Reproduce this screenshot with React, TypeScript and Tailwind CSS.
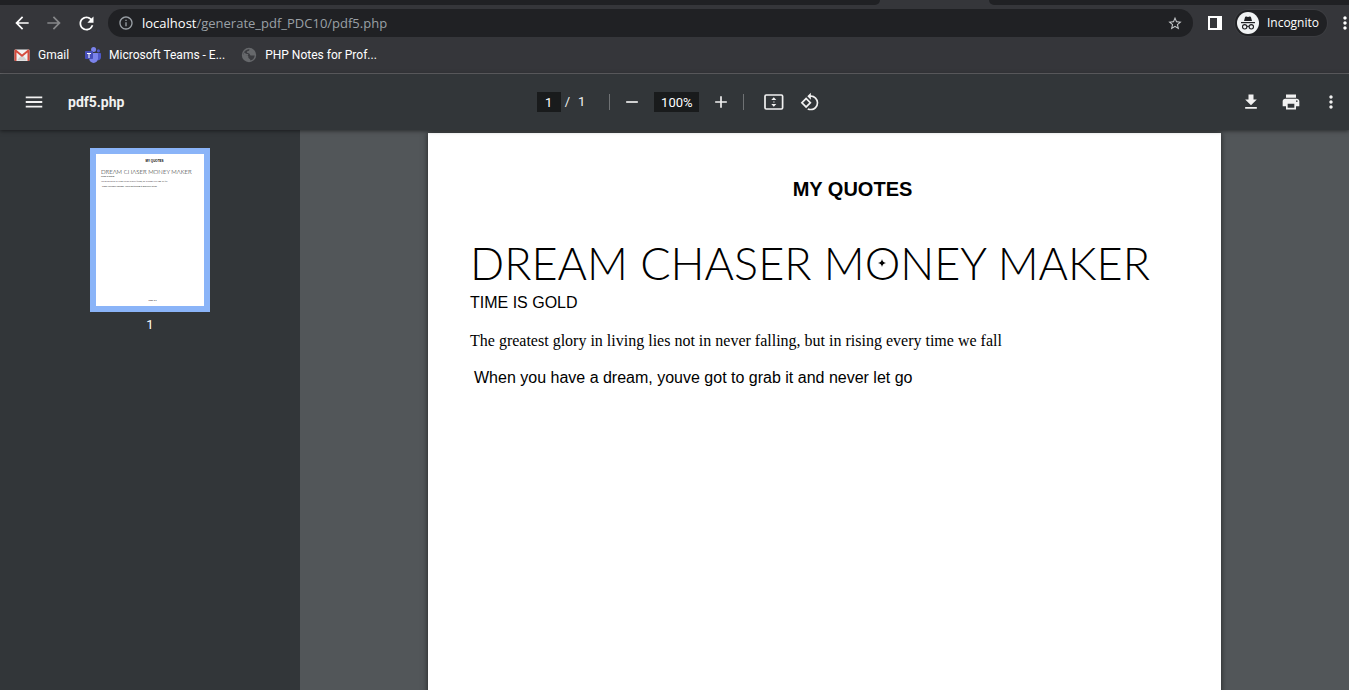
import React from "react";
import {
  MdArrowBack,
  MdArrowForward,
  MdRefresh,
  MdInfoOutline,
  MdStarBorder,
  MdMoreVert,
  MdMenu,
  MdRemove,
  MdAdd,
  MdFileDownload,
  MdPrint,
  MdRotate90DegreesCcw,
} from "react-icons/md";

function GmailIcon() {
  return (
    <svg width="16" height="16" viewBox="0 0 16 16" aria-hidden="true">
      <rect x="0.5" y="2.5" width="15" height="11.5" rx="1" fill="#f1f1f1" />
      <path d="M3 13.5 6.500 9 8 10.200 9.500 9l3.500 4.500z" fill="#d2d2d2" />
      <path d="M0.500 3.500v9.500a1 1 0 0 0 1 1h1V5.600L8 10l5.500-4.400V14h1a1 1 0 0 0 1-1V3.500a1 1 0 0 0-1.700-.8L8 7.400 2.200 2.700A1 1 0 0 0 .5 3.500z" fill="#d54b3d" />
    </svg>
  );
}

function TeamsIcon() {
  return (
    <svg width="16" height="16" viewBox="0 0 16 16" aria-hidden="true">
      <circle cx="13.400" cy="3.800" r="1.600" fill="#5059c9" />
      <path d="M11 6h4.300c.4 0 .7.300.7.700v3.800a2.700 2.700 0 0 1-4.500 2z" fill="#5059c9" />
      <circle cx="8.600" cy="2.600" r="2.500" fill="#7b83eb" />
      <path d="M5 6h7.300c.4 0 .7.300.7.700v4.800a4.400 4.400 0 0 1-8.800 0V6z" fill="#7b83eb" />
      <rect x="0" y="4" width="8" height="8" rx="0.800" fill="#464eb8" />
      <path d="M2 6h4v1H4.500v4h-1V7H2z" fill="#fff" />
    </svg>
  );
}

function GlobeIcon() {
  return (
    <svg width="16" height="16" viewBox="0 0 16 16" aria-hidden="true">
      <circle cx="8" cy="8" r="7.200" fill="#66686b" />
      <path
        d="M8.500 2.300c-.2 1.500-.8 1.700-2 2-.9.300-.8 1.500.2 1.800 1.400.4 1.900.5 2.300 1.700.5 1.100 2.200.8 4.700.6-.2 2.600-2 4.700-4.400 5.200.1-1.200-.2-1.700-1.200-2.200-1-.4-.9-1.300-.6-2C6.500 8.400 4.600 8.300 2.400 7.600 2.700 4.600 5.300 2.200 8.500 2.300z"
        fill="#3b3c40"
      />
      <path d="M3 5.200c1 1.200 2.300 1.700 4.200 1.900l-.2 1.700-4.500-.3z" fill="#66686b" />
    </svg>
  );
}

function SidePanelIcon() {
  return (
    <svg width="14" height="14" viewBox="0 0 14 14" aria-hidden="true">
      <path fillRule="evenodd" d="M0 0h14v14H0zM2 2v10h7V2z" fill="currentColor" />
    </svg>
  );
}

function IncognitoIcon() {
  return (
    <svg width="22" height="22" viewBox="0 0 22 22" aria-hidden="true">
      <circle cx="11" cy="11" r="11" fill="#f1f3f4" />
      <path d="M7 9 8 5.300c.2-.6.700-.9 1.300-.7l1.700.5 1.700-.5c.6-.2 1.100.1 1.300.7L15 9z" fill="#202124" />
      <rect x="4" y="10" width="14" height="1.200" fill="#202124" />
      <g fill="none" stroke="#202124" strokeWidth="1.100">
        <circle cx="7.700" cy="14.800" r="2.200" />
        <circle cx="14.300" cy="14.800" r="2.200" />
        <path d="M9.900 14.500c.7-.4 1.500-.4 2.200 0" />
      </g>
    </svg>
  );
}

function FitPageIcon() {
  return (
    <svg width="20" height="16" viewBox="0 0 20 16" aria-hidden="true">
      <rect x="1" y="1" width="17.600" height="14" rx="1.200" fill="none" stroke="currentColor" strokeWidth="1.700" />
      <path d="M9.800 3.200 12.300 6H7.300zM9.800 12.800 7.300 10h5z" fill="currentColor" />
      <path d="M9.300 7.400h1.200v1.200H9.300z" fill="currentColor" />
    </svg>
  );
}

function Sparkle() {
  return (
    <svg
      className="absolute left-1/2 top-1/2 -translate-x-1/2 -translate-y-1/2"
      width="8"
      height="8"
      viewBox="0 0 8 8"
      aria-hidden="true"
    >
      <path d="M4 0Q4.500 3.500 8 4 4.500 4.500 4 8 3.500 4.500 0 4 3.500 3.500 4 0z" fill="#000" />
    </svg>
  );
}

function IconButton({ label, className, children }: { label: string; className: string; children: React.ReactNode }) {
  return (
    <button type="button" aria-label={label} className={`flex shrink-0 items-center justify-center ${className}`}>
      {children}
    </button>
  );
}

function BrowserChrome() {
  return (
    <header className="shrink-0 border-b border-[#636467] bg-[#35363a] font-['Open_Sans',sans-serif] text-white">
      <div className="flex h-[5px] bg-[#35363a]">
        <div className="w-[880px] rounded-br-lg bg-[#202124]" />
        <div className="w-[109px]" />
        <div className="flex-1 rounded-bl-lg bg-[#202124]" />
      </div>
      <div className="flex h-9 items-center overflow-hidden pl-1.5">
        <IconButton label="Back" className="size-8"><MdArrowBack size={20} /></IconButton>
        <IconButton label="Forward" className="size-8 text-[#87888a]"><MdArrowForward size={20} /></IconButton>
        <IconButton label="Reload" className="size-8"><MdRefresh size={21} /></IconButton>
        <div className="ml-1.5 flex h-7 min-w-0 flex-1 items-center rounded-full bg-[#202124] px-2.5 text-[#9aa0a6]">
          <MdInfoOutline size={16} />
          <div className="ml-2 flex-1 text-[13px] leading-5">
            <span className="text-white">localhost</span>/generate_pdf_PDC10/pdf5.php
          </div>
          <IconButton label="Bookmark this page" className="size-4 text-[#c4c7c9]"><MdStarBorder size={17} /></IconButton>
        </div>
        <IconButton label="Side panel" className="ml-2 size-7"><SidePanelIcon /></IconButton>
        <button type="button" className="ml-1.5 flex h-[26px] items-center gap-2 rounded-full bg-[#202124] pl-0.5 pr-2 text-xs ring-1 ring-[#3c3d41]">
          <IncognitoIcon />
          Incognito
        </button>
        <IconButton label="Browser menu" className="-mr-1.5 ml-2 w-5"><MdMoreVert size={20} /></IconButton>
      </div>
      <nav className="flex h-8 items-center pb-1 pl-3.5 font-[Roboto,sans-serif] text-xs">
        <a href="#gmail" className="flex items-center gap-2"><GmailIcon />Gmail</a>
        <a href="#teams" className="ml-4 flex items-center gap-2"><TeamsIcon />Microsoft Teams - E...</a>
        <a href="#php" className="ml-4 flex items-center gap-2"><GlobeIcon />PHP Notes for Prof...</a>
      </nav>
    </header>
  );
}

function PdfToolbar() {
  return (
    <div className="relative z-10 flex h-14 shrink-0 items-center bg-[#323639] font-[Roboto,sans-serif] text-[#f1f1f1] shadow-[0_1px_4px_rgba(0,0,0,0.5)]">
      <div className="flex flex-1 items-center pl-4">
        <IconButton label="Menu" className="size-9"><MdMenu size={22} /></IconButton>
        <h1 className="ml-4 text-sm font-bold">pdf5.php</h1>
      </div>
      <div className="flex items-center text-[13px]">
        <input aria-label="Page number" defaultValue="1" className="h-5 w-6 bg-[#191b1c] text-center text-white" />
        <span className="ml-1">/</span>
        <span className="ml-2">1</span>
        <span className="ml-6 h-4 w-px bg-[#6f7274]" />
        <IconButton label="Zoom out" className="ml-2.5 size-6"><MdRemove size={20} /></IconButton>
        <input aria-label="Zoom level" defaultValue="100%" className="ml-2.5 h-5 w-[45px] bg-[#191b1c] text-center text-white" />
        <IconButton label="Zoom in" className="ml-2.5 size-6"><MdAdd size={20} /></IconButton>
        <span className="ml-2.5 h-4 w-px bg-[#6f7274]" />
        <IconButton label="Fit to page" className="ml-3 size-9"><FitPageIcon /></IconButton>
        <IconButton label="Rotate counterclockwise" className="size-9"><MdRotate90DegreesCcw size={20} /></IconButton>
      </div>
      <div className="flex flex-1 items-center justify-end gap-1">
        <IconButton label="Download" className="size-9"><MdFileDownload size={20} /></IconButton>
        <IconButton label="Print" className="size-9"><MdPrint size={20} /></IconButton>
        <IconButton label="More actions" className="size-9"><MdMoreVert size={20} /></IconButton>
      </div>
    </div>
  );
}

function Thumbnail() {
  return (
    <div className="flex flex-col items-center">
      <button
        type="button"
        aria-label="Page 1"
        className="flex h-[164px] w-[120px] flex-col border-[6px] border-[#8ab4f8] bg-white pb-1 pl-[5px] pt-1.5 text-left font-['Liberation_Sans',Arial,sans-serif] text-[2px] leading-[3px] text-black"
      >
        <span className="w-full pl-1 text-center text-[3px] font-bold">MY QUOTES</span>
        <span className="mt-[5px] whitespace-nowrap font-[Lato,sans-serif] text-[6px] font-light leading-[7px]">
          DREAM CHASER MONEY MAKER
        </span>
        <span>TIME IS GOLD</span>
        <span className="mt-0.5 font-['Liberation_Serif',serif]">
          The greatest glory in living lies not in never falling, but in rising every time we fall
        </span>
        <span className="mt-0.5 pl-px">When you have a dream, youve got to grab it and never let go</span>
        <span className="mt-auto w-full text-center">Page 1/1</span>
      </button>
      <span className="mt-1 font-[Roboto,sans-serif] text-[13px] leading-[18px] text-white">1</span>
    </div>
  );
}

function PdfPage() {
  return (
    <article className="h-[1122px] w-[793px] shrink-0 bg-white pl-[42px] pt-11 font-['Liberation_Sans',Arial,sans-serif] text-base leading-6 text-black shadow-[0_0_6px_rgba(0,0,0,0.6)]">
      <h2 className="pl-3.5 text-center text-xl leading-6 font-bold">MY QUOTES</h2>
      <p className="mt-[34px] whitespace-nowrap font-[Lato,sans-serif] text-[45px] font-light leading-[56px]">
        DREAM CHASER M<span className="relative inline-block">O<Sparkle /></span>NEY MAKER
      </p>
      <p>TIME IS GOLD</p>
      <p className="mt-3.5 font-['Liberation_Serif',serif]">
        The greatest glory in living lies not in never falling, but in rising every time we fall
      </p>
      <p className="mt-[13px] pl-1">When you have a dream, youve got to grab it and never let go</p>
    </article>
  );
}

export default function App() {
  return (
    <div className="flex h-screen flex-col overflow-hidden bg-[#323639]">
      <BrowserChrome />
      <PdfToolbar />
      <div className="flex min-h-0 flex-1">
        <aside className="w-[300px] shrink-0 bg-[#323639] pt-[18px]">
          <Thumbnail />
        </aside>
        <main className="flex min-w-0 flex-1 justify-center overflow-hidden bg-[#525659] pt-[3px]">
          <PdfPage />
        </main>
      </div>
    </div>
  );
}
